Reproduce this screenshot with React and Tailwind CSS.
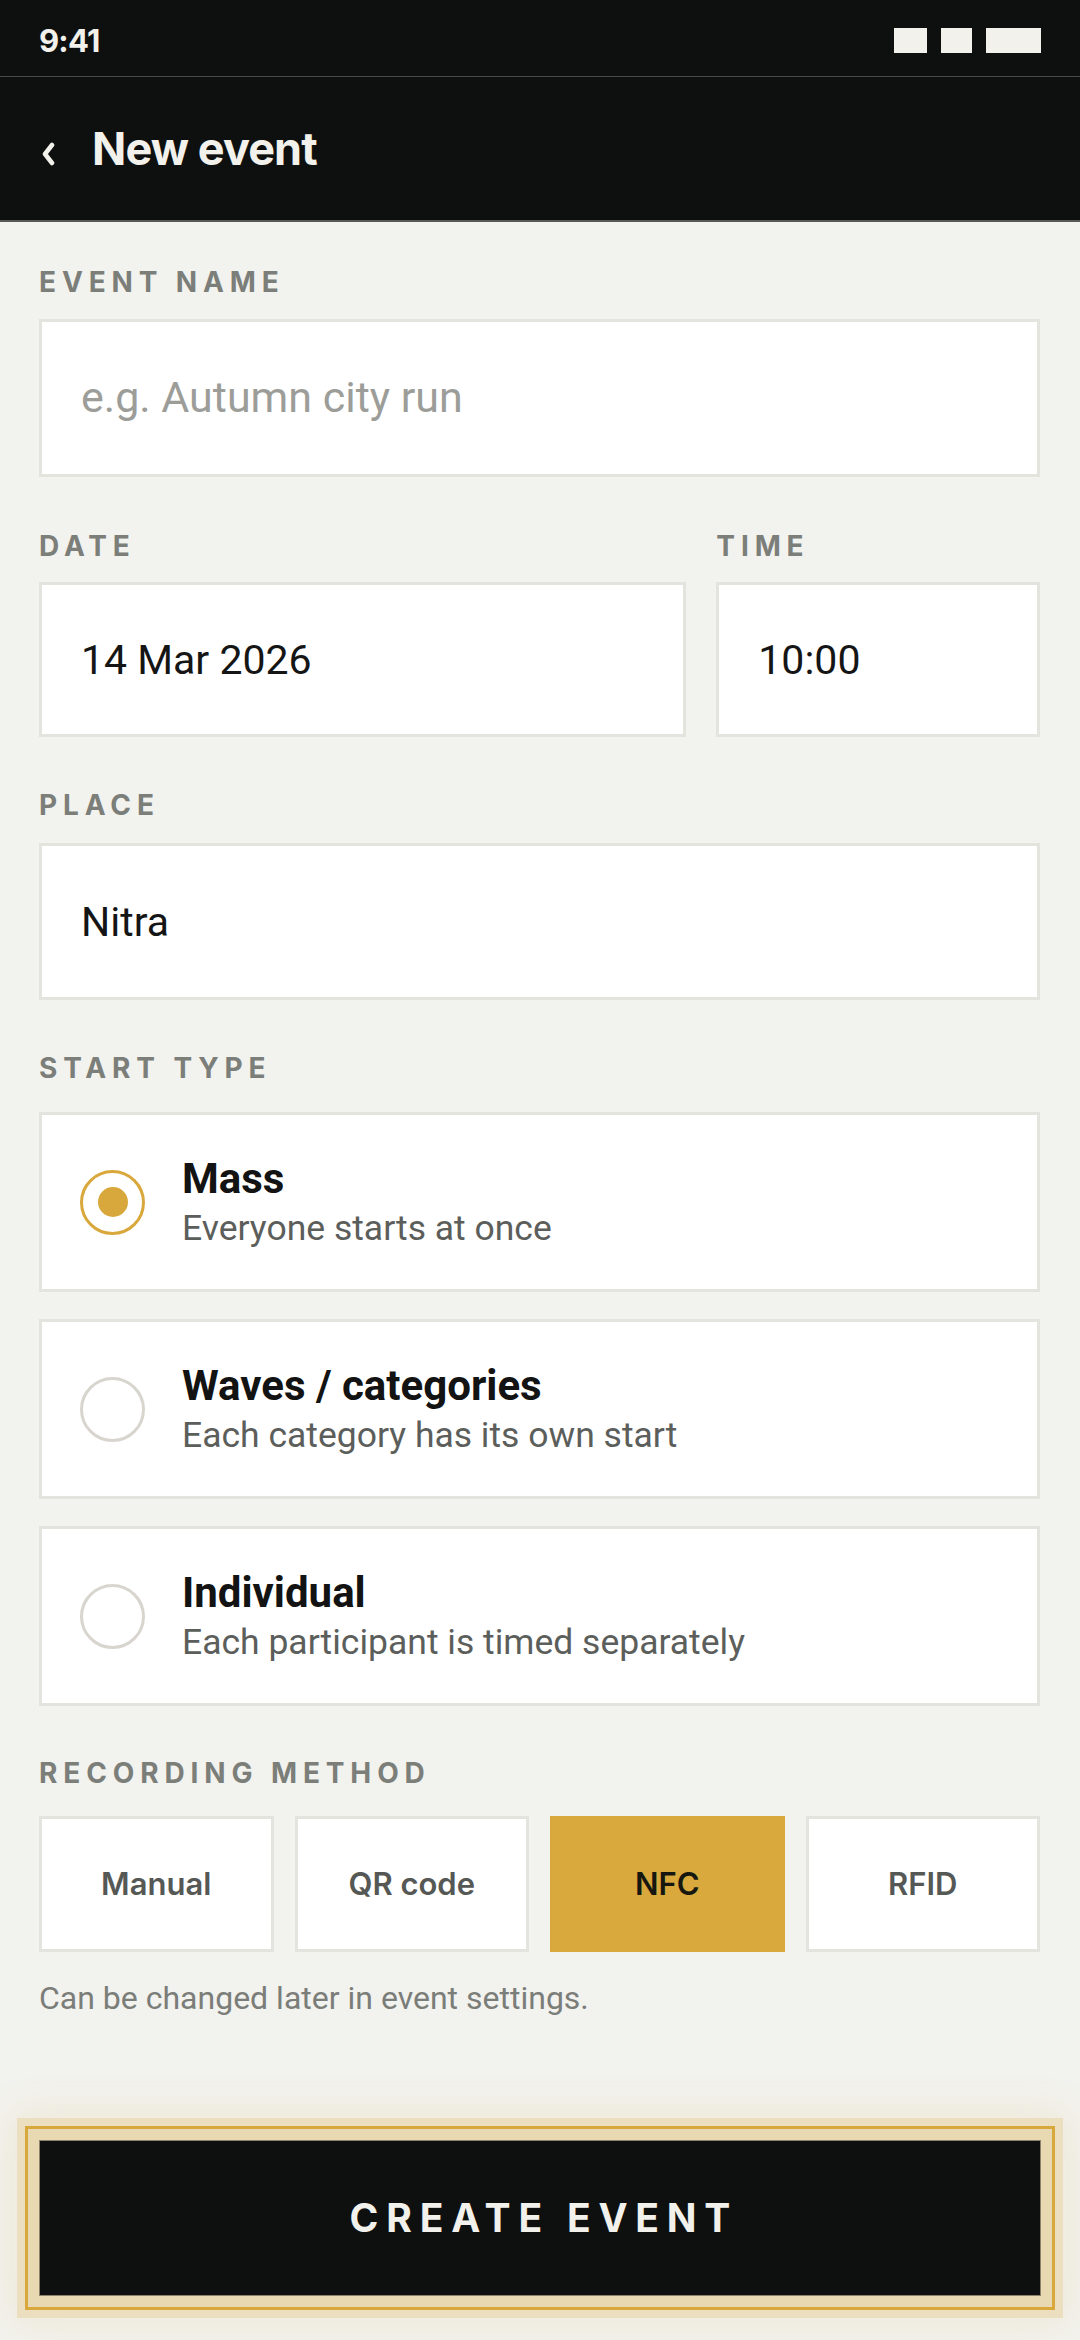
import { useState } from "react";

const sans = { fontFamily: "Roboto, 'Noto Sans', sans-serif" };
const grot = { fontFamily: "Inter, 'Liberation Sans', sans-serif" };

const startTypes = [
  { id: "mass", title: "Mass", sub: "Everyone starts at once" },
  { id: "waves", title: "Waves / categories", sub: "Each category has its own start" },
  { id: "individual", title: "Individual", sub: "Each participant is timed separately" },
];

const methods = ["Manual", "QR code", "NFC", "RFID"];

function Label({ children, className = "" }) {
  return (
    <div
      style={grot}
      className={
        "h-[32px] leading-[32px] text-[28px] font-bold tracking-[0.21em] text-[#7b7e79] " +
        className
      }
    >
      {children}
    </div>
  );
}

function Field({ value, placeholder, className = "" }) {
  return (
    <input
      readOnly
      defaultValue={value}
      placeholder={placeholder}
      style={sans}
      className={
        "block w-full bg-white border-[3px] border-[#e4e4df] pl-[39px] text-[41px] text-[#141514] placeholder:text-[#9c9d99] placeholder:text-[43px] outline-none " +
        className
      }
    />
  );
}

export default function App() {
  const [startType, setStartType] = useState("mass");
  const [method, setMethod] = useState("NFC");

  return (
    <div className="min-h-[2340px] w-[1080px] flex flex-col bg-[#f2f2ee]">
      {/* status bar */}
      <div className="h-[77px] bg-[#0e100f] border-b border-[#4a4b49] flex items-center justify-between pl-[39px] pr-[39px] pt-[6px]">
        <span style={grot} className="text-[31px] font-bold text-[#f2f1ec] tracking-tight">
          9:41
        </span>
        <div className="flex items-center gap-[14px] mb-[2px]">
          <div className="w-[33px] h-[25px] bg-[#f2f1ec]" />
          <div className="w-[31px] h-[25px] bg-[#f2f1ec]" />
          <div className="w-[55px] h-[25px] bg-[#f2f1ec]" />
        </div>
      </div>

      {/* header */}
      <div className="h-[145px] bg-[#0e100f] border-b-2 border-[#585856] flex items-center pl-[41px]">
        <svg width="14" height="24" viewBox="0 0 14 24" className="mt-[10px]">
          <polyline
            points="11,3 4,12 11,21"
            fill="none"
            stroke="#f2f1ec"
            strokeWidth="4.5"
            strokeLinecap="round"
            strokeLinejoin="round"
          />
        </svg>
        <h1
          style={grot}
          className="ml-[37px] text-[45px] font-bold tracking-[-0.02em] text-[#f2f1ec]"
        >
          New event
        </h1>
      </div>

      {/* form */}
      <main className="pl-[39px] pr-[40px] pt-[44px]">
        <Label className="mb-[21px]">EVENT NAME</Label>
        <Field placeholder="e.g. Autumn city run" className="h-[158px]" />

        <div className="mt-[53px] grid grid-cols-[2fr_1fr] gap-[30px]">
          <div>
            <Label className="mb-[20px]">DATE</Label>
            <Field value="14 Mar 2026" className="h-[155px]" />
          </div>
          <div>
            <Label className="mb-[20px]">TIME</Label>
            <Field value="10:00" className="h-[155px]" />
          </div>
        </div>

        <Label className="mt-[52px] mb-[22px]">PLACE</Label>
        <Field value="Nitra" className="h-[157px]" />

        <Label className="mt-[52px] mb-[28px]">START TYPE</Label>
        <div className="flex flex-col gap-[27px]">
          {startTypes.map((t) => {
            const on = startType === t.id;
            return (
              <button
                key={t.id}
                onClick={() => setStartType(t.id)}
                className="h-[180px] bg-white border-[3px] border-[#e4e4df] flex items-center pl-[38px] text-left"
              >
                <span
                  className={
                    "w-[65px] h-[65px] rounded-full border-[3px] flex items-center justify-center shrink-0 " +
                    (on ? "border-[#d9a83c]" : "border-[#d8d5ce]")
                  }
                >
                  {on && <span className="w-[30px] h-[30px] rounded-full bg-[#d9a83c]" />}
                </span>
                <span className="ml-[37px] flex flex-col" style={sans}>
                  <span className="text-[42px] leading-[48px] font-bold text-[#121312]">
                    {t.title}
                  </span>
                  <span className="mt-[4px] text-[35.5px] leading-[42px] text-[#5c5e5b]">
                    {t.sub}
                  </span>
                </span>
              </button>
            );
          })}
        </div>

        <Label className="mt-[51px] mb-[27px]">RECORDING METHOD</Label>
        <div className="grid grid-cols-4 gap-[21px]">
          {methods.map((m) => {
            const on = method === m;
            return (
              <button
                key={m}
                onClick={() => setMethod(m)}
                style={grot}
                className={
                  "h-[136px] text-[31px] font-semibold border-[3px] " +
                  (on
                    ? "bg-[#d9a93d] border-[#d9a93d] text-[#16170f]"
                    : "bg-white border-[#e4e4df] text-[#555855]")
                }
              >
                {m}
              </button>
            );
          })}
        </div>

        <p style={sans} className="mt-[28px] text-[32px] leading-[36px] text-[#7b7d79]">
          Can be changed later in event settings.
        </p>
      </main>

      {/* footer */}
      <div className="mt-auto pl-[39px] pr-[39px] pb-[44px]">
        <button
          style={grot}
          className="w-full h-[156px] bg-[#0e100f] border border-[#8c836d] text-[#f2f1ec] text-[39px] font-bold tracking-[0.2em] pl-[0.2em] shadow-[0_0_0_11px_#e9d9b3,0_0_0_14px_#d9a83c,0_0_0_22px_#ebdfc0,0_0_40px_26px_rgba(217,168,60,0.14)]"
        >
          CREATE EVENT
        </button>
      </div>
    </div>
  );
}
